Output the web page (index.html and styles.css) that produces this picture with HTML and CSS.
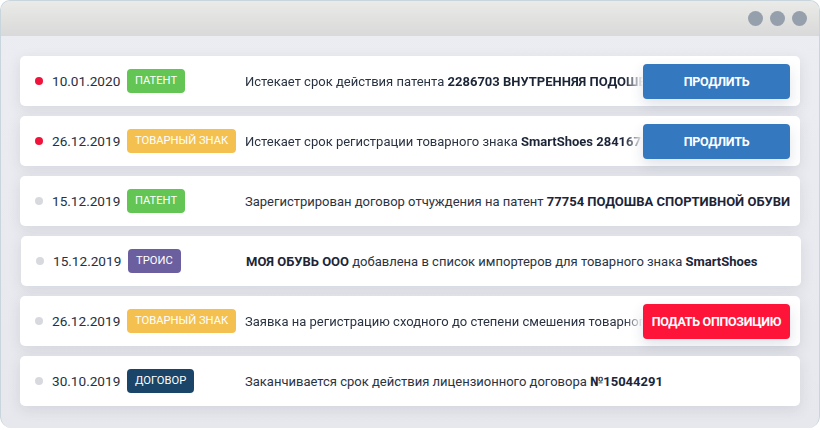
FILE: index.html
```html
<!DOCTYPE html>
<html lang="ru">
<head>
<meta charset="utf-8">
<title>Уведомления</title>
<link rel="stylesheet" href="styles.css">
</head>
<body>
<div class="window">
  <div class="titlebar">
    <span class="wdot"></span><span class="wdot"></span><span class="wdot"></span>
  </div>
  <div class="content">
    <div class="row">
      <span class="status status-red"></span>
      <span class="date">10.01.2020</span>
      <span class="tag tag-green">Патент</span>
      <p class="msg msg-fade">Истекает срок действия патента <b>2286703 ВНУТРЕННЯЯ ПОДОШВА ДЛЯ ОБУВИ</b></p>
      <button class="btn btn-blue">Продлить</button>
    </div>
    <div class="row">
      <span class="status status-red"></span>
      <span class="date">26.12.2019</span>
      <span class="tag tag-yellow">Товарный знак</span>
      <p class="msg msg-fade">Истекает срок регистрации товарного знака <b>SmartShoes 284167</b></p>
      <button class="btn btn-blue">Продлить</button>
    </div>
    <div class="row">
      <span class="status"></span>
      <span class="date">15.12.2019</span>
      <span class="tag tag-green">Патент</span>
      <p class="msg">Зарегистрирован договор отчуждения на патент <b>77754 ПОДОШВА СПОРТИВНОЙ ОБУВИ</b></p>
    </div>
    <div class="row row-shift">
      <span class="status"></span>
      <span class="date">15.12.2019</span>
      <span class="tag tag-purple">Троис</span>
      <p class="msg"><b>МОЯ ОБУВЬ ООО</b> добавлена в список импортеров для товарного знака <b>SmartShoes</b></p>
    </div>
    <div class="row">
      <span class="status"></span>
      <span class="date">26.12.2019</span>
      <span class="tag tag-yellow">Товарный знак</span>
      <p class="msg msg-fade">Заявка на регистрацию сходного до степени смешения товарного знака</p>
      <button class="btn btn-red">Подать оппозицию</button>
    </div>
    <div class="row">
      <span class="status"></span>
      <span class="date">30.10.2019</span>
      <span class="tag tag-navy">Договор</span>
      <p class="msg">Заканчивается срок действия лицензионного договора <b>№15044291</b></p>
    </div>
  </div>
</div>
</body>
</html>
```
FILE: styles.css
```css
* { box-sizing: border-box; }
html, body { margin: 0; padding: 0; background: #ffffff; }
body { font-family: Roboto, "Liberation Sans", sans-serif; }

.window {
  width: 820px;
  height: 428px;
  border: 1px solid #c9d5dc;
  border-bottom: none;
  border-radius: 10px 10px 12px 12px;
  overflow: hidden;
  background: linear-gradient(180deg, #ecedf2 0%, #e7e8ed 100%);
  display: flex;
  flex-direction: column;
}

.titlebar {
  height: 35px;
  flex: none;
  background: linear-gradient(180deg, #eaeae8 0%, #d9d9d9 100%);
  display: flex;
  align-items: center;
  justify-content: flex-end;
  gap: 7px;
  padding-right: 12px;
}
.wdot {
  width: 15px;
  height: 15px;
  border-radius: 50%;
  background: #96a0ac;
}

.content {
  padding: 20px 19px 0 19px;
  display: flex;
  flex-direction: column;
  gap: 10px;
}

.row {
  height: 50px;
  background: #ffffff;
  border-radius: 5px;
  box-shadow: 0 4px 14px rgba(40, 48, 80, 0.10);
  display: grid;
  grid-template-columns: 17px 75px 118px minmax(0, 1fr) auto;
  align-items: center;
  padding: 0 10px 0 15px;
}
.row-shift { margin-left: 1px; margin-right: -1px; }

.status {
  width: 8px;
  height: 8px;
  border-radius: 50%;
  background: #d8d9df;
}
.status-red { background: #f0143c; }

.date {
  font-size: 13.6px;
  color: #27303f;
}

.tag {
  justify-self: start;
  height: 24px;
  line-height: 24px;
  padding: 0 8px;
  border-radius: 4px;
  color: #ffffff;
  font-size: 11.2px;
  text-transform: uppercase;
}
.tag-green { background: #62c554; }
.tag-yellow { background: #f4c150; }
.tag-purple { background: #6b5fa0; }
.tag-navy { background: #1b4568; }

.msg {
  margin: 0;
  font-size: 13px;
  color: #2a3342;
  white-space: nowrap;
  overflow: hidden;
}
.msg b { font-weight: 700; color: #1c2537; }
.msg-fade {
  -webkit-mask-image: linear-gradient(270deg, transparent 0px, #000 18px);
  mask-image: linear-gradient(270deg, transparent 0px, #000 18px);
}

.btn {
  width: 147px;
  height: 35px;
  border: none;
  border-radius: 4px;
  color: #ffffff;
  font-family: Roboto, "Liberation Sans", sans-serif;
  font-weight: 700;
  font-size: 12.5px;
  letter-spacing: -0.3px;
  text-transform: uppercase;
  box-shadow: 0 6px 14px rgba(40, 60, 100, 0.14);
}
.btn-blue { background: #3479c0; }
.btn-red { background: #ff1439; }
```
